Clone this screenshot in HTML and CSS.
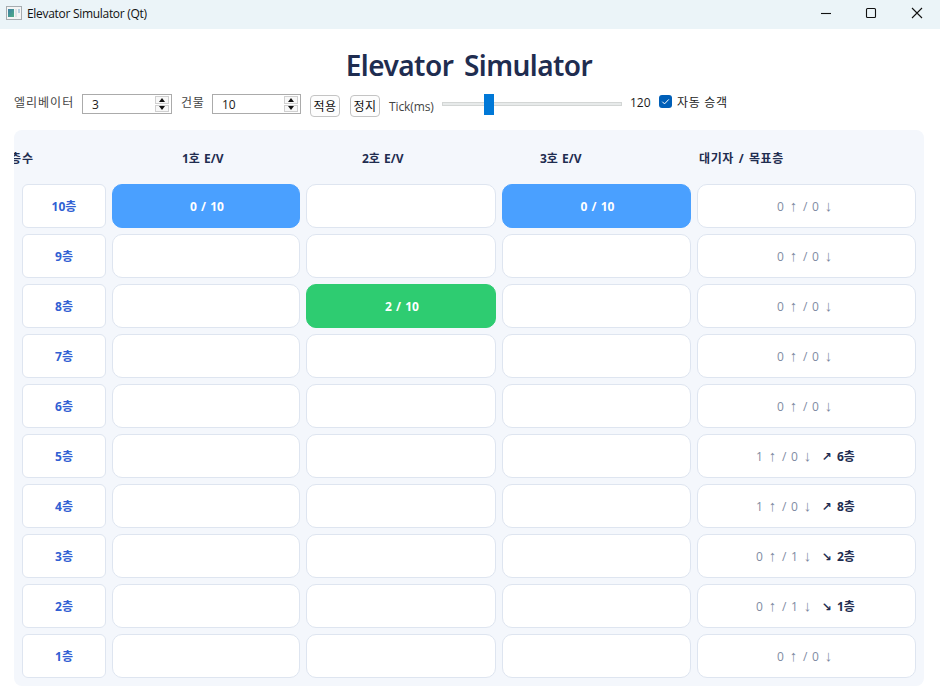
FILE: index.html
```
<!DOCTYPE html>
<html lang="ko">
<head>
<meta charset="utf-8">
<title>Elevator Simulator (Qt)</title>
<link rel="stylesheet" href="styles.css">
</head>
<body>
<header class="titlebar">
  <svg class="app-icon" width="16" height="14" viewBox="0 0 16 14">
    <defs><linearGradient id="g" x1="0" y1="0" x2="1" y2="1"><stop offset="0" stop-color="#3c7fa6"/><stop offset="1" stop-color="#4fae84"/></linearGradient></defs>
    <rect x=".5" y=".5" width="15" height="13" fill="#f4f5f5" stroke="#a6acb0"/>
    <rect x="2" y="3" width="6" height="8" fill="url(#g)"/>
    <rect x="9" y="3" width="2" height="8" fill="#dfe3e5"/>
    <rect x="12" y="3" width="2" height="4" fill="#b5cfe0"/>
  </svg>
  <span class="window-title">Elevator Simulator (Qt)</span>
  <svg class="window-buttons" width="104" height="12" viewBox="0 0 104 12" fill="none" stroke="#111" stroke-width="1.1">
    <path d="M1 6.5H11"/><rect x="46.500" y="1.500" width="9" height="9" rx="1"/><path d="M92 1l10 10M102 1L92 11"/>
  </svg>
</header>
<h1 class="heading">Elevator Simulator</h1>
<div class="toolbar">
  <span class="label label-elevator">엘리베이터</span>
  <div class="spin"><span class="spin-value">3</span><span class="steps"><i class="up"></i><i class="down"></i></span></div>
  <span class="label label-building">건물</span>
  <div class="spin spin-building"><span class="spin-value">10</span><span class="steps"><i class="up"></i><i class="down"></i></span></div>
  <button class="btn btn-apply">적용</button>
  <button class="btn">정지</button>
  <span class="label label-tick">Tick(ms)</span>
  <div class="slider"><div class="groove"></div><div class="thumb"></div></div>
  <span class="tick-value">120</span>
  <svg class="check" width="13" height="13" viewBox="0 0 13 13"><rect width="13" height="13" rx="3" fill="#005fb8"/><path d="M3.300 6.700l2.200 2.200 4.300-4.500" fill="none" stroke="#fff"/></svg>
  <span class="auto">자동 승객</span>
</div>
<main class="panel">
  <div class="head"><span class="head-floor">층수</span><span>1호 E/V</span><span>2호 E/V</span><span>3호 E/V</span><span class="head-wait">대기자 / 목표층</span></div>
  <div class="grid">
    <div class="floor">10층</div><div class="car idle">0 / 10</div><div class="car"></div><div class="car idle">0 / 10</div><div class="wait"><span class="n">0</span><span class="a">↑</span><span class="s">/</span><span class="n">0</span><span class="a">↓</span></div>
    <div class="floor">9층</div><div class="car"></div><div class="car"></div><div class="car"></div><div class="wait"><span class="n">0</span><span class="a">↑</span><span class="s">/</span><span class="n">0</span><span class="a">↓</span></div>
    <div class="floor">8층</div><div class="car"></div><div class="car moving">2 / 10</div><div class="car"></div><div class="wait"><span class="n">0</span><span class="a">↑</span><span class="s">/</span><span class="n">0</span><span class="a">↓</span></div>
    <div class="floor">7층</div><div class="car"></div><div class="car"></div><div class="car"></div><div class="wait"><span class="n">0</span><span class="a">↑</span><span class="s">/</span><span class="n">0</span><span class="a">↓</span></div>
    <div class="floor">6층</div><div class="car"></div><div class="car"></div><div class="car"></div><div class="wait"><span class="n">0</span><span class="a">↑</span><span class="s">/</span><span class="n">0</span><span class="a">↓</span></div>
    <div class="floor">5층</div><div class="car"></div><div class="car"></div><div class="car"></div><div class="wait target"><span class="n">1</span><span class="a">↑</span><span class="s">/</span><span class="n">0</span><span class="a">↓</span><span class="d">↗</span><b class="t">6층</b></div>
    <div class="floor">4층</div><div class="car"></div><div class="car"></div><div class="car"></div><div class="wait target"><span class="n">1</span><span class="a">↑</span><span class="s">/</span><span class="n">0</span><span class="a">↓</span><span class="d">↗</span><b class="t">8층</b></div>
    <div class="floor">3층</div><div class="car"></div><div class="car"></div><div class="car"></div><div class="wait target"><span class="n">0</span><span class="a">↑</span><span class="s">/</span><span class="n">1</span><span class="a">↓</span><span class="d">↘</span><b class="t">2층</b></div>
    <div class="floor">2층</div><div class="car"></div><div class="car"></div><div class="car"></div><div class="wait target"><span class="n">0</span><span class="a">↑</span><span class="s">/</span><span class="n">1</span><span class="a">↓</span><span class="d">↘</span><b class="t">1층</b></div>
    <div class="floor">1층</div><div class="car"></div><div class="car"></div><div class="car"></div><div class="wait"><span class="n">0</span><span class="a">↑</span><span class="s">/</span><span class="n">0</span><span class="a">↓</span></div>
  </div>
</main>
</body>
</html>
```
FILE: styles.css
```
* { box-sizing: border-box; }
body {
  margin: 0;
  width: 940px;
  height: 700px;
  overflow: hidden;
  background: #fff;
  color: #1a1a1a;
  font: 12px/16px "Open Sans", "Noto Sans CJK KR", sans-serif;
  white-space: nowrap;
}
.titlebar {
  display: flex;
  align-items: center;
  height: 29px;
  padding: 0 16px 3px 6px;
  background: #ebf4f8;
}
.window-title { margin: 1px auto 0 5px; color: #111; letter-spacing: -0.3px; }
.window-buttons { display: block; }
.heading {
  margin: 18px 0 0;
  height: 36px;
  padding-right: 2px;
  text-align: center;
  font: 600 28px/36px "Noto Sans", sans-serif;
  letter-spacing: -0.55px;
  word-spacing: 4px;
  color: #1f2d50;
}
.toolbar {
  display: flex;
  align-items: flex-start;
  height: 47px;
  padding: 11px 0 0 14px;
}
.label { margin-top: 1px; color: #444; }
.label-elevator { width: 68px; letter-spacing: 1px; }
.spin {
  display: flex;
  width: 90px;
  height: 20px;
  padding: 1px 2px 1px 9px;
  border: 1px solid #ababab;
}
.spin-building { width: 89px; }
.spin-value { flex: 1; line-height: 18px; }
.steps { display: flex; flex-direction: column; gap: 1px; }
.steps i {
  display: flex;
  align-items: center;
  justify-content: center;
  width: 14px;
  height: 8px;
  border: 1px solid #d0d0d0;
  background: #f8f8f8;
}
.steps i::after { content: ""; border: 3px solid transparent; }
.steps .up::after { border-top: 0; border-bottom: 4px solid #111; }
.steps .down::after { border-bottom: 0; border-top: 4px solid #111; }
.label-building { width: 31px; margin-left: 9px; letter-spacing: 0.7px; }
.btn {
  width: 30px;
  height: 22px;
  margin: 1px 0 0 10px;
  padding: 2px 0 0;
  border: 1px solid #c4c4c4;
  border-radius: 4px;
  background: #fdfdfd;
  color: #111;
  font: inherit;
  letter-spacing: 0.4px;
}
.btn-apply { margin-left: 9px; }
.label-tick { width: 53px; margin: 5px 0 0 9px; letter-spacing: -0.1px; }
.slider { position: relative; width: 180px; height: 20px; }
.groove { height: 4px; margin-top: 8px; border: 1px solid #d3d6d5; background: #e7eaea; }
.thumb { position: absolute; left: 42px; top: 0; width: 10px; height: 21px; background: #0078d7; }
.tick-value { width: 29px; margin: 1px 0 0 8px; }
.check { margin-top: 1px; }
.auto { margin: 1px 0 0 5px; letter-spacing: 0.7px; }
.panel {
  width: 910px;
  height: 556px;
  margin-left: 14px;
  overflow: hidden;
  border-radius: 8px;
  background: #f4f7fc;
}
.head {
  display: grid;
  grid-template-columns: 168px 180px 178px 159px 1fr;
  height: 54px;
  padding-top: 21px;
  font-weight: 700;
  word-spacing: 1px;
  color: #1f2d50;
}
.head-floor { margin-left: -4px; letter-spacing: 1px; }
.head-wait { letter-spacing: 0.6px; }
.grid {
  display: grid;
  grid-template-columns: 84px 188px 190px 189px 219px;
  grid-auto-rows: 44px;
  gap: 6px;
  padding-left: 8px;
}
.floor, .car, .wait {
  display: flex;
  align-items: center;
  justify-content: center;
  padding-top: 2px;
  border: 1px solid #dee5f0;
  background: #fff;
}
.floor { border-radius: 6px; font-weight: 700; color: #315fd3; }
.car { border-radius: 10px; font-weight: 700; word-spacing: 1px; padding-left: 2px; color: #fff; }
.idle { border-color: #4aa0ff; background: #4aa0ff; }
.moving { border-color: #2ecc71; background: #2ecc71; }
.wait { border-radius: 10px; padding-left: 2px; color: #7f8ba3; }
.target { padding-left: 0; }
.n { width: 7px; }
.a { width: 19px; margin-top: -2px; text-align: center; font: 15px/16px "Liberation Sans", sans-serif; }
.s { width: 9px; }
.d { width: 19px; text-align: center; font: 700 12px/16px "DejaVu Sans", sans-serif; color: #1f2d50; }
.t { width: 21px; padding-left: 1px; color: #1f2d50; }
```
